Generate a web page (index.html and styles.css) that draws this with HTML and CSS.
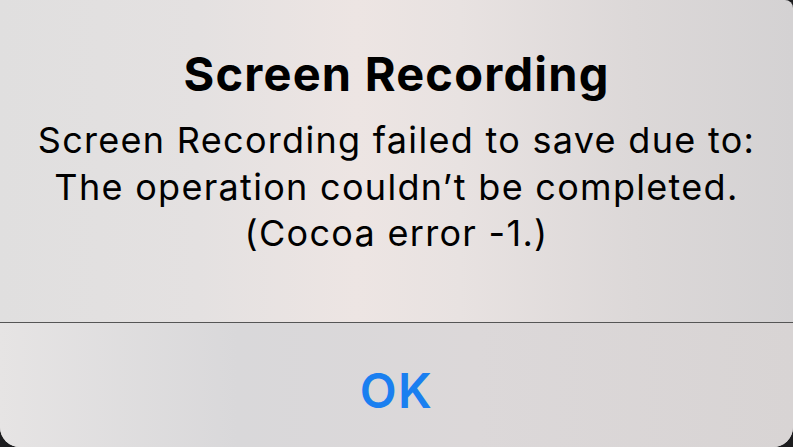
FILE: index.html
```html
<!DOCTYPE html>
<html lang="en">
<head>
  <meta charset="UTF-8" />
  <meta name="viewport" content="width=device-width, initial-scale=1" />
  <title>Screen Recording</title>
  <link rel="stylesheet" href="styles.css">
</head>
<body>
  <div class="alert">
    <div class="alert-content">
      <h2 class="alert-title">Screen Recording</h2>
      <p class="alert-message">Screen Recording failed to save due to:<br>The operation couldn’t be completed.<br>(Cocoa error -1.)</p>
    </div>
    <div class="alert-actions">
      <button class="alert-button">OK</button>
    </div>
  </div>
</body>
</html>
```

FILE: styles.css
```css
html, body {
  height: 100%;
}

body {
  margin: 0;
  background: #1c1c1e;
  font-family: Inter, 'Noto Sans', sans-serif;
  color: #000;
  overflow: hidden;
}

.alert {
  display: flex;
  flex-direction: column;
  height: 447px;
  border-radius: 0 8px 20px 20px;
  background: linear-gradient(90deg, #e0dfdf 0%, #e4e1e1 25%, #ede5e3 45%, #e8e2e1 58%, #dcd8d8 80%, #d4d2d3 100%);
  overflow: hidden;
}

.alert-content {
  flex: 1;
  padding-top: 46px;
  text-align: center;
}

.alert-title {
  margin: 0 0 15px 0;
  font-size: 47px;
  line-height: 56px;
  font-weight: 700;
  letter-spacing: 1.2px;
}

.alert-message {
  margin: 0;
  font-size: 36px;
  line-height: 46.5px;
  font-weight: 400;
  letter-spacing: 1.3px;
}

.alert-actions {
  height: 125px;
  border-top: 1px solid #555;
  display: flex;
  align-items: center;
  justify-content: center;
  padding-top: 10px;
  box-sizing: border-box;
  background: linear-gradient(90deg, #e6e4e4 0%, #d9d8da 30%, #dcd8d9 60%, #d8d4d4 100%);
}

.alert-button {
  border: none;
  background: none;
  padding: 0;
  font-family: inherit;
  font-size: 48px;
  font-weight: 600;
  letter-spacing: 1.5px;
  color: #1a7ff0;
  cursor: pointer;
}
```
